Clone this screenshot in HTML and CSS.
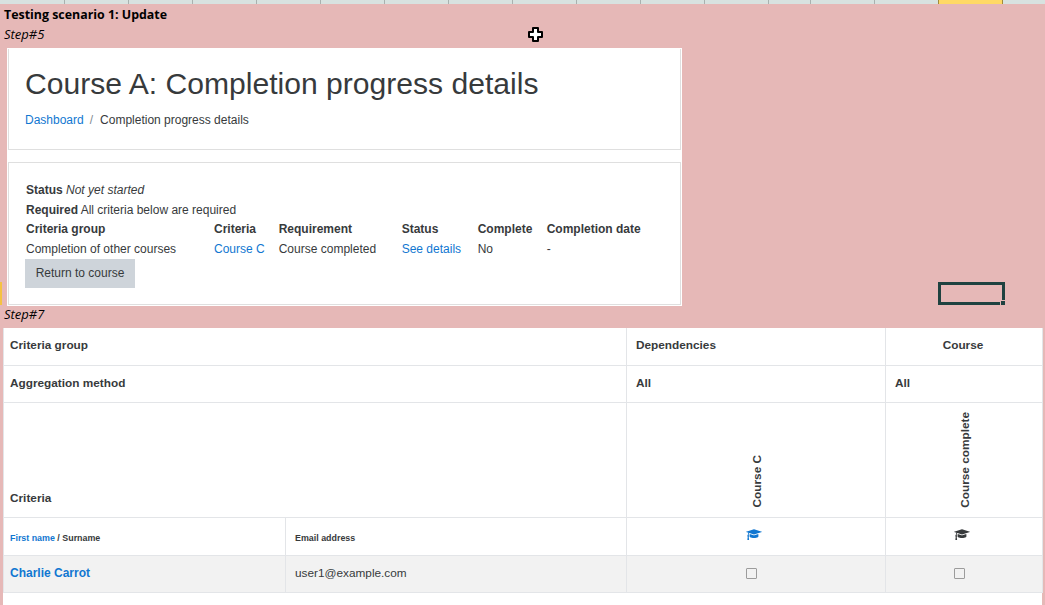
FILE: index.html
```
<!DOCTYPE html>
<html>

<head>
	<meta charset='utf-8'>
	<title>Testing scenario 1: Update</title>
	<link rel="stylesheet" href="styles.css">
</head>

<body>
	<div class="col-heads">
		<div class="col-head"></div>
		<div class="col-head"></div>
		<div class="col-head"></div>
		<div class="col-head"></div>
		<div class="col-head"></div>
		<div class="col-head"></div>
		<div class="col-head"></div>
		<div class="col-head"></div>
		<div class="col-head"></div>
		<div class="col-head"></div>
		<div class="col-head"></div>
		<div class="col-head"></div>
		<div class="col-head narrow"></div>
		<div class="col-head"></div>
		<div class="col-head"></div>
		<div class="col-head active"></div>
		<div class="col-head"></div>
	</div>

	<section class="sheet">
		<div class="scenario">Testing scenario 1: Update</div>
		<div class="step">Step#5</div>
		<div class="shot">
			<div class="card card-head">
				<h1>Course A: Completion progress details</h1>
				<div class="crumbs"><a href="#">Dashboard</a><span class="sep">/</span>Completion progress details</div>
			</div>
			<div class="card card-body">
				<div class="line"><b>Status</b> <i>Not yet started</i></div>
				<div class="line"><b>Required</b> All criteria below are required</div>
				<table class="details">
					<tr>
						<th>Criteria group</th>
						<th>Criteria</th>
						<th>Requirement</th>
						<th>Status</th>
						<th>Complete</th>
						<th>Completion date</th>
					</tr>
					<tr>
						<td>Completion of other courses</td>
						<td><a href="#">Course C</a></td>
						<td>Course completed</td>
						<td><a href="#">See details</a></td>
						<td>No</td>
						<td>-</td>
					</tr>
				</table>
				<button class="btn">Return to course</button>
			</div>
		</div>
		<div class="step step-two">Step#7</div>
	</section>

	<section class="report-wrap">
		<table class="report">
			<colgroup>
				<col class="c-name">
				<col class="c-mail">
				<col class="c-dep">
				<col class="c-course">
			</colgroup>
			<tr class="r-short">
				<th colspan="2">Criteria group</th>
				<th class="pad-wide">Dependencies</th>
				<th class="center">Course</th>
			</tr>
			<tr class="r-short">
				<th colspan="2">Aggregation method</th>
				<th class="pad-wide">All</th>
				<th class="pad-wide">All</th>
			</tr>
			<tr class="r-tall">
				<th colspan="2" class="bottom">Criteria</th>
				<th class="bottom center"><span class="vert nudge">Course C</span></th>
				<th class="bottom center"><span class="vert nudge">Course complete</span></th>
			</tr>
			<tr class="r-users">
				<th class="small"><a href="#">First name</a> / Surname</th>
				<th class="small pad-wide">Email address</th>
				<td class="center"><svg class="cap cap-blue" viewBox="0 0 2304 1792"><path d="M1774 836l18 316q4 69-82 128t-235 93.5-323 34.5-323-34.5-235-93.5-82-128l18-316 574 181q22 7 48 7t48-7zm530-324q0 23-22 31l-1120 352q-4 1-10 1t-10-1l-652-206q-43 35-71 114.5t-34 182.5q63 36 63 109 0 69-58 107l58 433q2 14-8 25-9 11-24 11h-192q-15 0-24-11-10-11-8-25l58-433q-58-38-58-107 0-73 65-111 11-207 98-330l-333-104q-22-8-22-31t22-31l1120-352q4-1 10-1t10 1l1120 352q22 8 22 31z"/></svg></td>
				<td class="center"><svg class="cap" viewBox="0 0 2304 1792"><path d="M1774 836l18 316q4 69-82 128t-235 93.5-323 34.5-323-34.5-235-93.5-82-128l18-316 574 181q22 7 48 7t48-7zm530-324q0 23-22 31l-1120 352q-4 1-10 1t-10-1l-652-206q-43 35-71 114.5t-34 182.5q63 36 63 109 0 69-58 107l58 433q2 14-8 25-9 11-24 11h-192q-15 0-24-11-10-11-8-25l58-433q-58-38-58-107 0-73 65-111 11-207 98-330l-333-104q-22-8-22-31t22-31l1120-352q4-1 10-1t10 1l1120 352q22 8 22 31z"/></svg></td>
			</tr>
			<tr class="r-short r-grey">
				<td class="name"><a href="#">Charlie Carrot</a></td>
				<td class="pad-wide">user1@example.com</td>
				<td class="center"><span class="check"></span></td>
				<td class="center"><span class="check"></span></td>
			</tr>
		</table>
	</section>

	<!-- things floating over the sheet -->
	<div class="row-mark"></div>
	<div class="selection"><span class="handle"></span></div>
	<svg class="cursor" viewBox="0 0 15 15"><path d="M5 1h5v4h4v5h-4v4H5v-4H1V5h4z" fill="#fff" stroke="#000" stroke-width="2" stroke-linejoin="round"/></svg>
</body>

</html>
```

FILE: styles.css
```
* {
	box-sizing: border-box;
}

html,
body {
	height: 100%;
}

body {
	margin: 0;
	overflow: hidden;
	background: #e6b8b7;
	color: #373a3c;
	font-family: "Liberation Sans", Arial, sans-serif;
	font-size: 12px;
}

a {
	color: #1177d1;
	text-decoration: none;
}

/* spreadsheet column heads, only the bottom edge is visible */
.col-heads {
	display: flex;
	height: 4px;
	padding-left: 1px;
	background: #d8e2e0;
}

.col-head {
	flex: none;
	width: 64px;
	border-right: 1px solid #a9b1af;
}

.col-head.narrow {
	width: 42px;
}

.col-head.active {
	background: #ffd966;
	border-right: 1px solid #a08a3c;
	border-left: 1px solid #a08a3c;
	margin-left: -1px;
	width: 65px;
}

.sheet {
	height: 324px;
	color: #000;
	font-family: "Open Sans", sans-serif;
}

.scenario {
	padding: 2px 0 0 4px;
	height: 20px;
	font-size: 12.4px;
	line-height: 17px;
	font-weight: bold;
}

.step {
	padding-left: 4px;
	height: 24px;
	font-size: 13px;
	line-height: 20px;
	font-style: italic;
}

.step-two {
	height: 20px;
	line-height: 17px;
}

.shot {
	width: 675px;
	height: 258px;
	margin-left: 7px;
	padding: 1px 1px 0;
	background: #fff;
	color: #373a3c;
	font-family: "Liberation Sans", Arial, sans-serif;
}

.card {
	border: 1px solid #dfdfdf;
	border-top: 0;
}

.card-head {
	height: 101px;
	padding: 17px 16px 0;
}

.card-body {
	height: 143px;
	margin-top: 12px;
	border-top: 1px solid #dfdfdf;
	padding: 17px 17px 0;
}

h1 {
	margin: 0;
	font-size: 30.1px;
	line-height: 36px;
	font-weight: normal;
}

.crumbs {
	margin-top: 9px;
	line-height: 18px;
}

.sep {
	padding: 0 7px 0 6px;
	color: #818a91;
}

.line {
	height: 20px;
	line-height: 20px;
}

.details {
	border-collapse: collapse;
}

.details th,
.details td {
	height: 20px;
	padding: 0 14px 0 0;
	text-align: left;
	white-space: nowrap;
}

.details th {
	height: 19px;
	padding-bottom: 2px;
}

.details th:first-child {
	width: 188px;
}

.details th:nth-child(2) {
	width: 63px;
}

.details th:nth-child(3) {
	width: 123px;
}

.details th:nth-child(4) {
	width: 76px;
}

.details th:nth-child(5) {
	width: 69px;
}

.btn {
	display: block;
	width: 110px;
	height: 29px;
	margin-left: -1px;
	padding: 0 0 2px;
	border: 0;
	background: #ced4da;
	color: #373a3c;
	font: 12px "Liberation Sans", Arial, sans-serif;
}

.report-wrap {
	height: 277px;
	margin-left: 3px;
	margin-right: 3px;
	background: #fff;
}

.report {
	width: 1039px;
	table-layout: fixed;
	border-collapse: collapse;
	font-size: 11.8px;
}

.c-name {
	width: 282px;
}

.c-mail {
	width: 341px;
}

.c-dep {
	width: 259px;
}

.c-course {
	width: 157px;
}

.report th,
.report td {
	padding: 0 6px;
	border: 1px solid #e3e5e8;
	text-align: left;
	vertical-align: middle;
}

.report tr:first-child th {
	border-top: 0;
}

.report th {
	font-weight: bold;
}

.report .pad-wide {
	padding-left: 9px;
}

.report .center {
	padding: 0 2px 0 0;
	text-align: center;
}

.report .r-short th,
.report .r-short td {
	padding-bottom: 2px;
}

.report .bottom {
	padding-bottom: 12px;
	vertical-align: bottom;
}

.report .center.bottom {
	padding-bottom: 6px;
}

.report .small {
	padding-top: 3px;
	font-size: 8.9px;
}

.r-short {
	height: 37px;
}

.r-users {
	height: 38px;
}

.r-tall {
	height: 115px;
}

.r-grey {
	background: #f2f2f2;
}

.report .name {
	font-size: 12px;
	font-weight: bold;
}

.vert {
	display: inline-block;
	writing-mode: vertical-rl;
	transform: rotate(180deg);
	line-height: 14px;
}

.nudge {
	margin-left: 4px;
}

.cap {
	display: inline-block;
	width: 16px;
	height: 13px;
	margin: 0 2px 4px 0;
	fill: #373a3c;
	vertical-align: middle;
}

.cap-blue {
	fill: #1177d1;
}

.check {
	display: inline-block;
	width: 11px;
	height: 11px;
	margin: 0 7px 0 0;
	border: 1px solid #9c9c9c;
	border-radius: 1px;
	vertical-align: middle;
}

.row-mark {
	position: absolute;
	left: 0;
	top: 282px;
	width: 2px;
	height: 23px;
	background: #f5c242;
}

.selection {
	position: absolute;
	left: 938px;
	top: 282px;
	width: 67px;
	height: 23px;
	border: 3px solid #1f4240;
}

.handle {
	position: absolute;
	right: -4px;
	bottom: -4px;
	width: 6px;
	height: 6px;
	background: #1f4240;
	border: 1px solid #e6b8b7;
}

.cursor {
	position: absolute;
	left: 528px;
	top: 27px;
	width: 15px;
	height: 15px;
}
```
